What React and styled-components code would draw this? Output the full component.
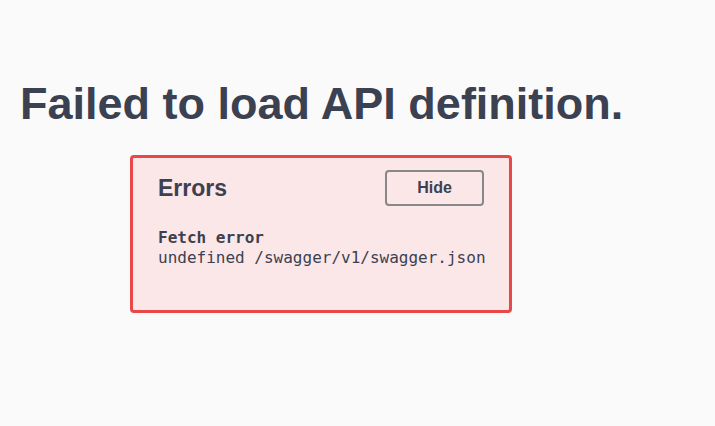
import React from 'react'
import styled, { createGlobalStyle } from 'styled-components'

const GlobalStyle = createGlobalStyle`
  html, body {
    margin: 0;
    padding: 0;
    background: #fafafa;
  }
  body {
    font-family: "Liberation Sans", Arial, sans-serif;
    color: #3b4151;
  }
`

const Page = styled.div`
  width: 715px;
  height: 426px;
  padding: 76px 0 0 20px;
  box-sizing: border-box;
`

const Title = styled.h1`
  margin: 0;
  font-size: 45px;
  line-height: 56px;
  font-weight: bold;
  color: #3b4151;
`

const ErrorsWrapper = styled.div`
  margin: 23px 0 0 110px;
  width: 382px;
  height: 158px;
  box-sizing: border-box;
  padding: 12px 25px 0 25px;
  background: #fbe7e7;
  border: 3px solid #e94848;
  border-radius: 4px;
`

const Header = styled.div`
  display: flex;
  align-items: center;
  justify-content: space-between;
`

const ErrorsTitle = styled.h4`
  margin: 0;
  font-size: 23px;
  font-weight: bold;
  color: #3b4151;
`

const HideButton = styled.button`
  width: 99px;
  height: 36px;
  background: transparent;
  border: 2px solid #888;
  border-radius: 4px;
  font-family: "Liberation Sans", Arial, sans-serif;
  font-size: 16px;
  font-weight: bold;
  color: #3b4151;
`

const ErrorItem = styled.div`
  margin-top: 22px;
  font-family: "DejaVu Sans Mono", "Liberation Mono", monospace;
  font-size: 16px;
  line-height: 20px;
  white-space: nowrap;
  color: #3b4151;
`

const ErrorLabel = styled.div`
  font-weight: bold;
`

export default function App() {
  return (
    <Page>
      <GlobalStyle />
      <Title>Failed to load API definition.</Title>
      <ErrorsWrapper>
        <Header>
          <ErrorsTitle>Errors</ErrorsTitle>
          <HideButton>Hide</HideButton>
        </Header>
        <ErrorItem>
          <ErrorLabel>Fetch error</ErrorLabel>
          <div>undefined /swagger/v1/swagger.json</div>
        </ErrorItem>
      </ErrorsWrapper>
    </Page>
  )
}
